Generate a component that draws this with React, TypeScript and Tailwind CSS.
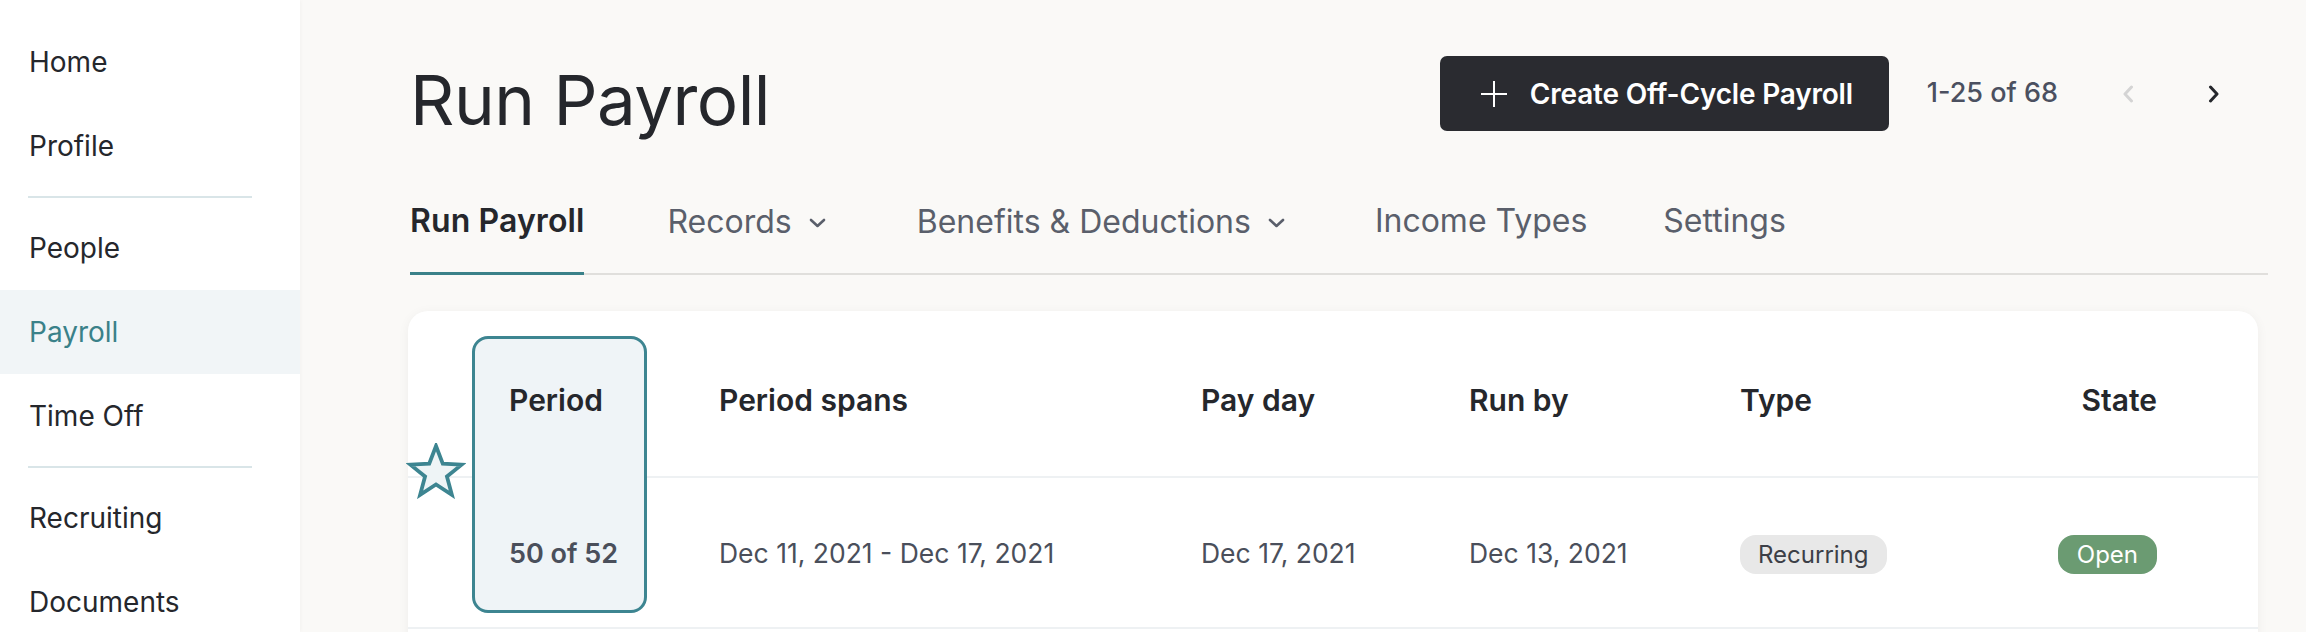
import React from "react";

const font = { fontFamily: "Inter, 'Noto Sans', sans-serif" };

function ChevronDown() {
  return (
    <svg width="17" height="10" viewBox="0 0 17 10" className="mt-[3px]">
      <path d="M2 2 L8.5 8 L15 2" fill="none" stroke="#5a5f6b" strokeWidth="2.6" strokeLinecap="round" strokeLinejoin="round" />
    </svg>
  );
}

function Star() {
  return (
    <svg width="60" height="56" viewBox="0 0 60 56" className="absolute left-[-2px] top-[132px] z-[3]">
      <polygon
        points="30,3 36.76,20.7 55.68,21.66 40.94,33.55 45.87,51.84 30,41.5 14.13,51.84 19.06,33.55 4.32,21.66 23.24,20.7"
        fill="#eef4f6"
        stroke="#3d8591"
        strokeWidth="3.8"
        strokeLinejoin="miter"
      />
    </svg>
  );
}

export default function App() {
  const navTop = ["Home", "Profile"];
  const navMid = ["People", "Payroll", "Time Off"];
  const navBot = ["Recruiting", "Documents"];
  const item = (label: string) => (
    <div
      key={label}
      className={
        "h-[84px] flex items-center px-[29px] text-[28px] " +
        (label === "Payroll" ? "bg-[#f1f5f7] text-[#3a8189]" : "text-[#25272c]")
      }
    >
      {label}
    </div>
  );
  const divider = <div className="ml-[28px] w-[224px] my-[8px] h-[2px] bg-[#d9e5e8]" />;

  return (
    <div style={font} className="w-[2306px] h-[632px] overflow-hidden flex bg-[#faf9f7]">
      {/* Sidebar */}
      <div className="w-[300px] shrink-0 bg-white pt-[20px] shadow-[1px_0_4px_rgba(0,0,0,0.03)] z-10">
        {navTop.map(item)}
        {divider}
        {navMid.map(item)}
        {divider}
        {navBot.map(item)}
      </div>

      {/* Main */}
      <div className="flex-1 pl-[110px] pr-[38px]">
        {/* Header */}
        <div className="mt-[56px] h-[75px] flex items-center justify-between">
          <h1 className="text-[69px] leading-none font-normal text-[#25272c] mt-[14px] tracking-[-0.5px]">Run Payroll</h1>
          <div className="flex items-center">
            <button className="h-[75px] w-[449px] rounded-[7px] bg-[#2a2b30] flex items-center pl-[40px] text-white">
              <svg width="28" height="28" viewBox="0 0 28 28">
                <path d="M14 1 V27 M1 14 H27" stroke="white" strokeWidth="2" />
              </svg>
              <span className="ml-[22px] text-[28px] font-semibold tracking-[-0.2px]">Create Off-Cycle Payroll</span>
            </button>
            <span className="ml-[38px] text-[27px] font-medium text-[#4b5060]">1-25 of 68</span>
            <svg width="12" height="18" viewBox="0 0 12 18" className="ml-[64px]">
              <path d="M9.5 2 L3 9 L9.5 16" fill="none" stroke="#d4d4d4" strokeWidth="3" strokeLinecap="round" strokeLinejoin="round" />
            </svg>
            <svg width="12" height="18" viewBox="0 0 12 18" className="ml-[74px] mr-[48px]">
              <path d="M2.5 2 L9 9 L2.5 16" fill="none" stroke="#25272c" strokeWidth="3" strokeLinecap="round" strokeLinejoin="round" />
            </svg>
          </div>
        </div>

        {/* Tabs */}
        <div className="mt-[72px] flex border-b-2 border-[#e0dfdc] text-[32px] leading-[36px]">
          <div className="pb-[33px] -mb-[2px] border-b-[3px] border-[#3a8189] font-semibold text-[#25272c] tracking-[0.1px]">Run Payroll</div>
          <div className="ml-[83px] pb-[33px] flex items-center gap-[17px] text-[#5a5f6b]">
            <span>Records</span>
            <ChevronDown />
          </div>
          <div className="ml-[91px] pb-[33px] flex items-center gap-[17px] text-[#5a5f6b]">
            <span>Benefits &amp; Deductions</span>
            <ChevronDown />
          </div>
          <div className="ml-[90px] pb-[33px] text-[#5a5f6b]">Income Types</div>
          <div className="ml-[76px] pb-[33px] text-[#5a5f6b]">Settings</div>
        </div>

        {/* Card */}
        <div className="relative mt-[36px] ml-[-2px] mr-[10px] h-[400px] rounded-[20px] bg-white shadow-[0_2px_12px_rgba(0,0,0,0.05)]">
          <div className="absolute left-[64px] top-[25px] w-[175px] h-[277px] rounded-[16px] border-[3px] border-[#3d8591] bg-[#eff4f7] z-[1]" />
          <Star />
          <div className="h-[167px] pt-[14px] px-[101px] border-b-2 border-[#eef1f3] grid grid-cols-[210px_482px_268px_271px_1fr_auto] items-center text-[30px] font-semibold text-[#25272c]">
            <div className="relative z-[2]">Period</div>
            <div>Period spans</div>
            <div>Pay day</div>
            <div>Run by</div>
            <div>Type</div>
            <div className="text-right">State</div>
          </div>
          <div className="h-[151px] pt-[3px] px-[101px] border-b-2 border-[#eef1f3] grid grid-cols-[210px_482px_268px_271px_1fr_auto] items-center text-[26.5px] text-[#4a4f5b]">
            <div className="relative z-[2] font-semibold text-[27px]">50 of 52</div>
            <div>Dec 11, 2021 - Dec 17, 2021</div>
            <div>Dec 17, 2021</div>
            <div>Dec 13, 2021</div>
            <div>
              <span className="inline-flex items-center h-[39px] px-[18px] rounded-[16px] bg-[#e8e8e8] text-[24px] text-[#3c3f47]">Recurring</span>
            </div>
            <div className="text-right">
              <span className="inline-flex items-center h-[39px] px-[19px] rounded-[16px] bg-[#6b9b72] text-[24px] text-white">Open</span>
            </div>
          </div>
        </div>
      </div>
    </div>
  );
}
